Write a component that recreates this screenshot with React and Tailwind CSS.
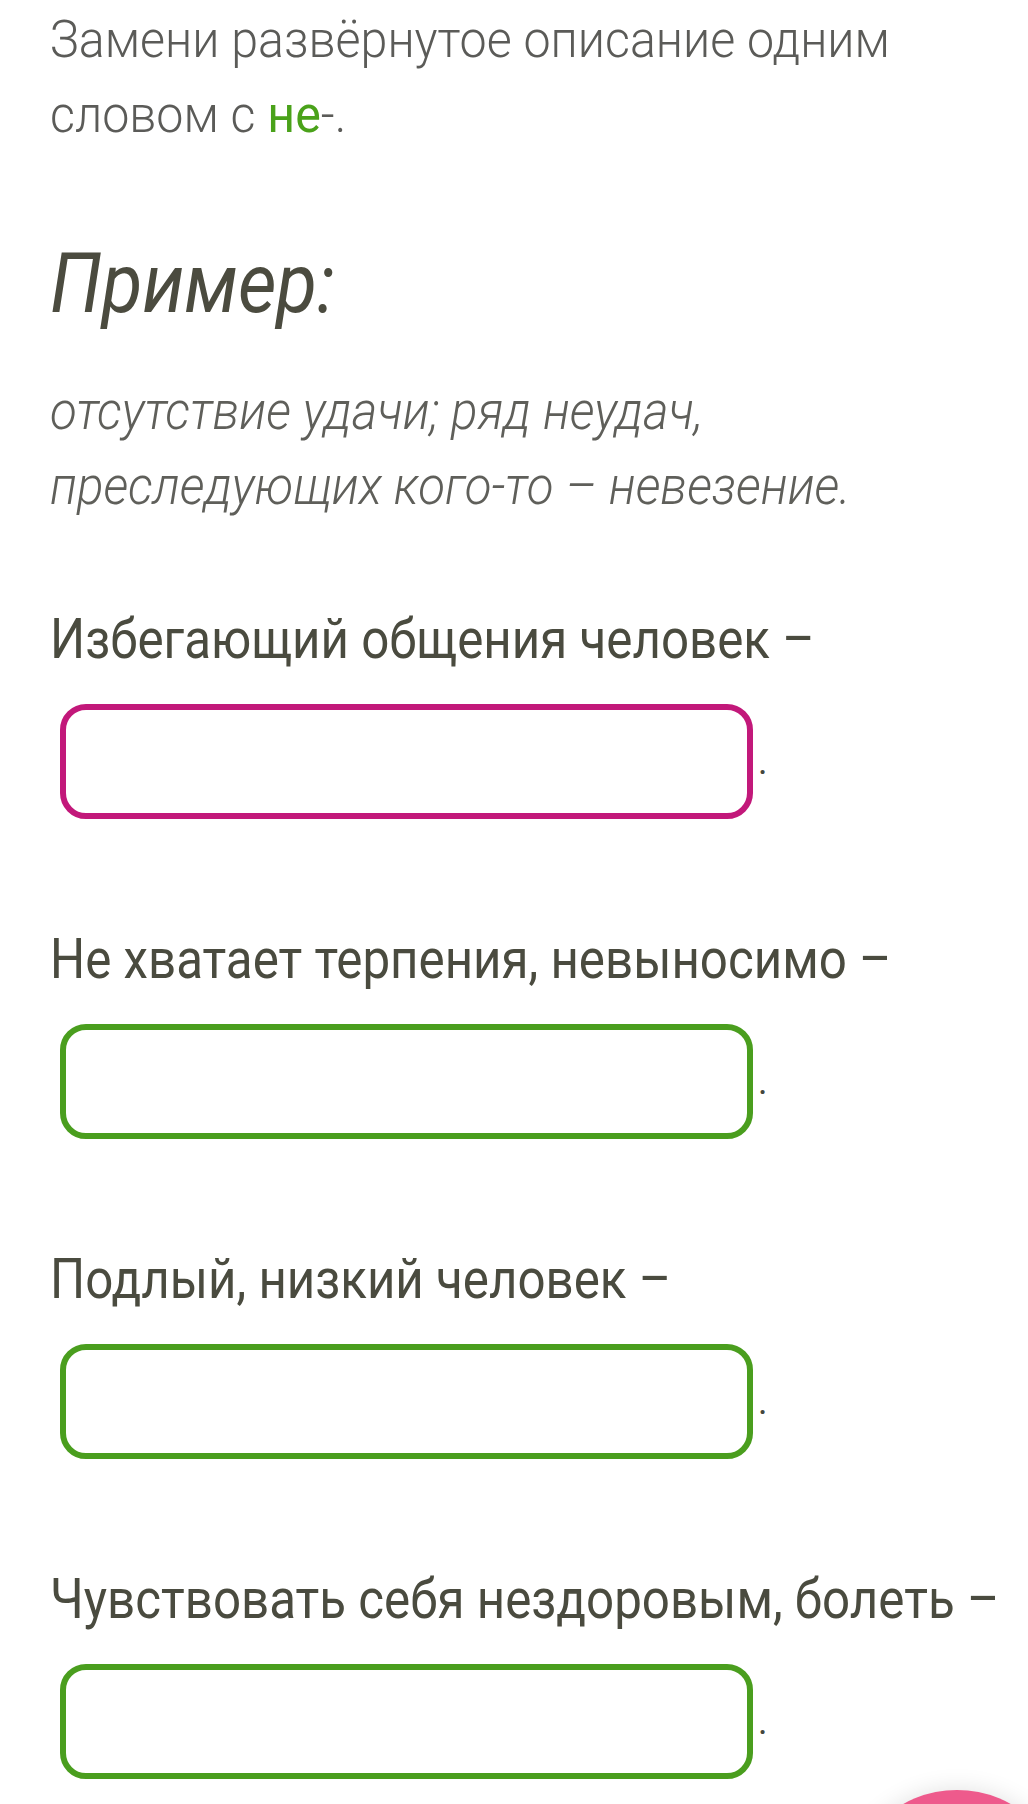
const QUESTIONS = [
  { text: "Избегающий общения человек –", state: "error" },
  { text: "Не хватает терпения, невыносимо –", state: "ok" },
  { text: "Подлый, низкий человек –", state: "ok" },
  { text: "Чувствовать себя нездоровым, болеть –", state: "ok" },
];

function AnswerRow({ text, state }) {
  return (
    <div className="h-[320px]">
      <div className="w-max origin-left scale-x-[0.88] text-[56px] leading-[64px] text-[#4a4b3f] whitespace-nowrap">
        {text}
      </div>
      <div className="mt-[33px] flex items-center">
        <input
          type="text"
          className={
            state === "error"
              ? "ml-[10px] h-[115px] w-[693px] rounded-[26px] border-[6px] border-[#c2187a] bg-white outline-none"
              : "ml-[10px] h-[115px] w-[693px] rounded-[26px] border-[6px] border-[#4a9e1e] bg-white outline-none"
          }
        />
        <span className="ml-[5px] text-[36px] leading-none text-[#45463d]">.</span>
      </div>
    </div>
  );
}

export default function App() {
  return (
    <div className="relative h-[1804px] overflow-hidden bg-white font-['Roboto',sans-serif]">
      <div className="pl-[50px] pt-[2px]">
        <p className="w-max origin-left scale-x-[0.93] text-[52px] leading-[75px] font-light text-[#5b5b58]">
          Замени развёрнутое описание одним
          <br />
          словом с <span className="font-normal text-[#4aa21a]">не</span>-.
        </p>

        <h2 className="mt-[82px] w-max origin-left scale-x-[0.9] text-[83px] leading-[100px] italic text-[#4b4b3f]">
          Пример:
        </h2>

        <p className="mt-[40px] w-max origin-left scale-x-[0.93] text-[53px] leading-[75px] italic font-light text-[#5f5f5a]">
          отсутствие удачи; ряд неудач,
          <br />
          преследующих кого-то – невезение.
        </p>

        <div className="mt-[83px]">
          {QUESTIONS.map((q) => (
            <AnswerRow key={q.text} text={q.text} state={q.state} />
          ))}
        </div>
      </div>

      <button className="absolute left-[847px] top-[1790px] h-[220px] w-[220px] rounded-full bg-[#ee5a8c] shadow-[0_0_24px_rgba(0,0,0,0.12)]" />
    </div>
  );
}
